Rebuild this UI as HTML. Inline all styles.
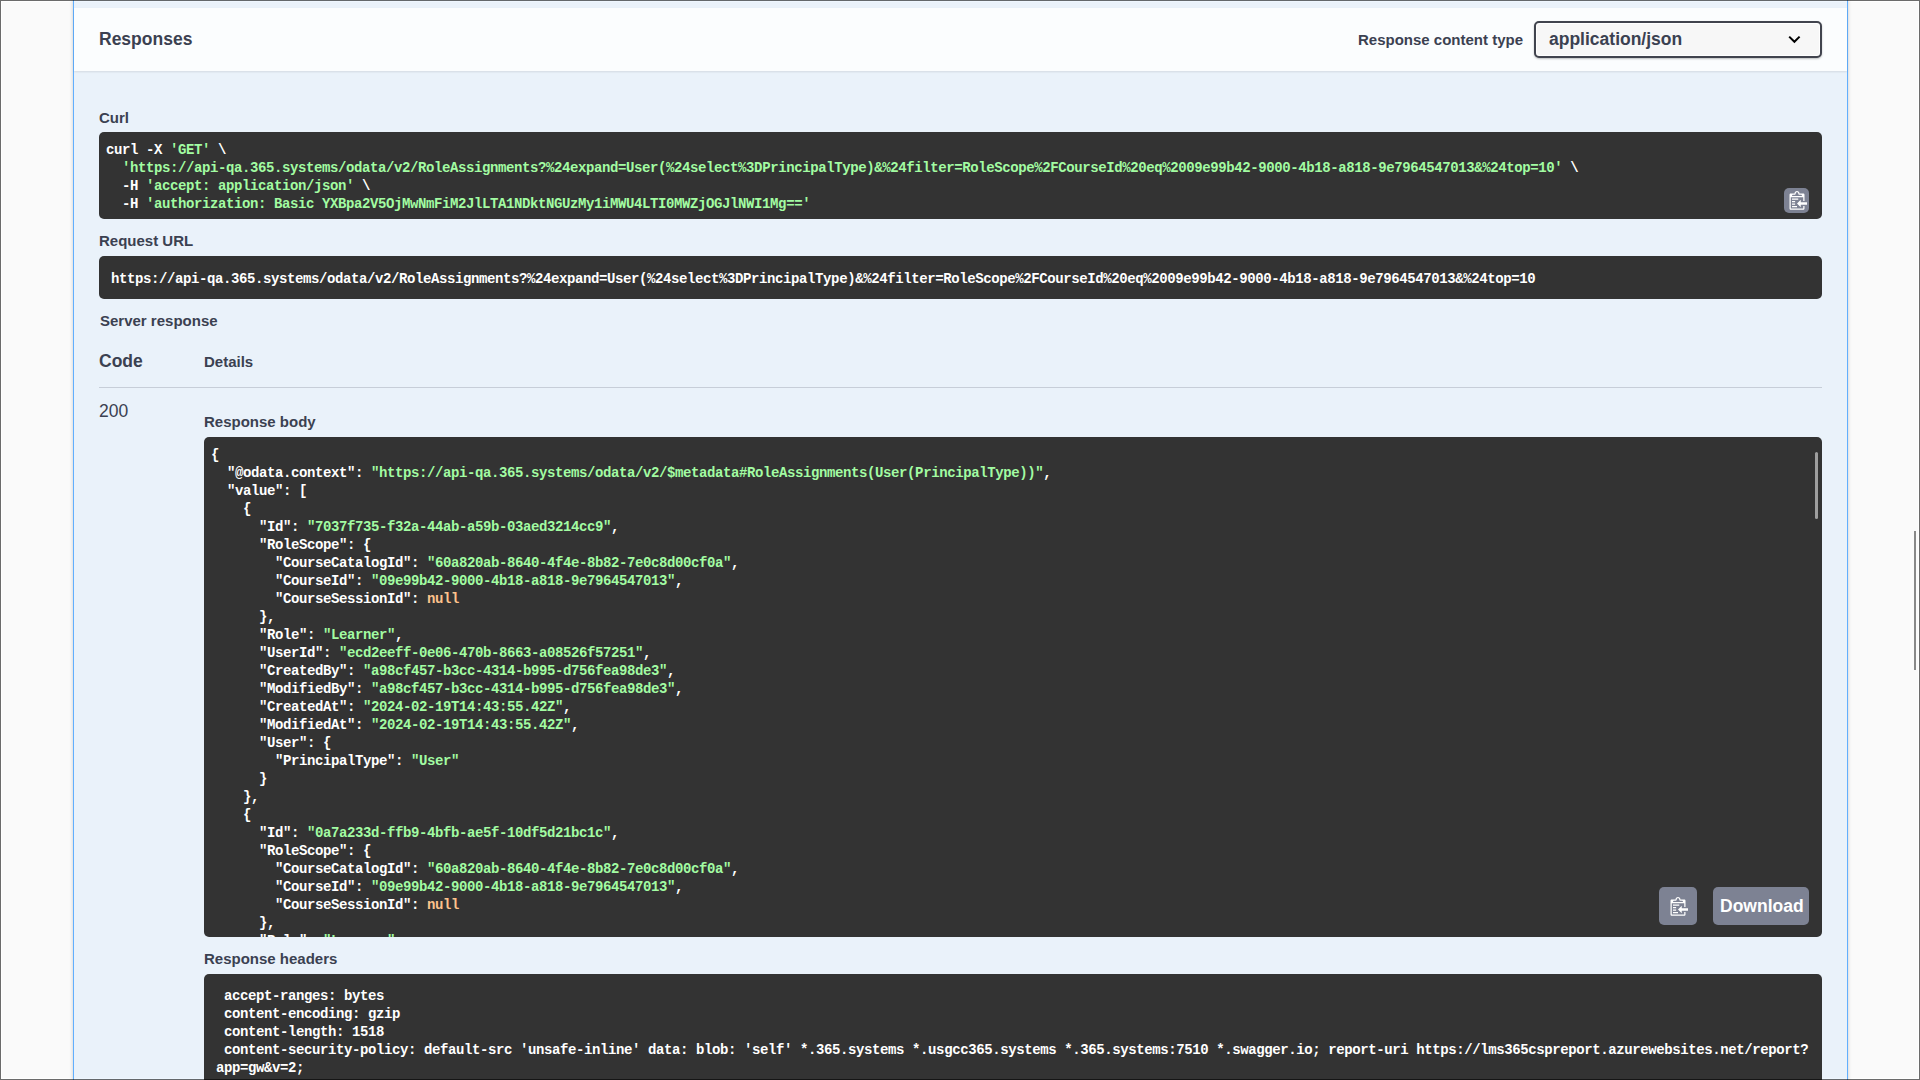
<!DOCTYPE html>
<html><head><meta charset="utf-8">
<style>
html,body{margin:0;padding:0;width:1920px;height:1080px;overflow:hidden;background:#fff;}
.inner{position:absolute;left:2px;top:2px;width:1916px;height:1076px;background:#fafafa;}
body{position:relative;font-family:"Liberation Sans",sans-serif;color:#3b4151;}
.a{position:absolute;}
.frame{position:absolute;left:0;top:0;width:1918px;height:1078px;border:1px solid rgba(0,0,0,.58);z-index:50;pointer-events:none;}
.opblock{position:absolute;left:73px;top:-10px;width:1773px;height:1200px;border:1px solid #61affe;background:rgba(97,175,254,.1);box-shadow:0 0 3.75px rgba(0,0,0,.19);}
.sechead{position:absolute;left:74px;top:8px;width:1773px;height:63px;background:rgba(255,255,255,.8);box-shadow:0 1px 2px rgba(0,0,0,.1);}
.lbl{position:absolute;font-weight:bold;font-size:15px;white-space:pre;line-height:1;}
.pre{position:absolute;background:#333;border-radius:5px;}
.mono{font-family:"Liberation Mono",monospace;font-weight:bold;font-size:14px;letter-spacing:-0.4px;line-height:18px;white-space:pre;color:#fff;position:absolute;}
.s{color:#a2fca2;}
.n{color:#fcc28c;}
.btn{position:absolute;background:#7d8293;border-radius:5px;}
</style></head><body>
<div class="inner"></div>
<div class="frame"></div>
<div class="opblock"></div>
<div class="sechead"></div>
<div class="lbl" style="left:99px;top:31px;font-size:17.5px;">Responses</div>
<div class="lbl" style="left:1358px;top:32px;">Response content type</div>
<div class="a" style="left:1534px;top:21px;width:284px;height:33px;border:2px solid #41444e;border-radius:5px;background:#f7f7f7;box-shadow:0 1px 2px rgba(0,0,0,.25), inset 0 0 0 1px #fff;"></div>
<div class="lbl" style="left:1549px;top:31px;font-size:17.5px;">application/json</div>
<svg class="a" style="left:1786px;top:33px" width="16" height="12" viewBox="0 0 16 12"><path d="M3.2 3.6 L8.4 8.8 L13.6 3.6" fill="none" stroke="#000" stroke-width="2"/></svg>

<div class="lbl" style="left:99px;top:110px;">Curl</div>
<div class="pre" style="left:99px;top:132px;width:1723px;height:87px;"></div>
<div class="mono" style="left:106px;top:141px;">curl -X <span class="s">'GET'</span> \
  <span class="s">'https://api-qa.365.systems/odata/v2/RoleAssignments?%24expand=User(%24select%3DPrincipalType)&amp;%24filter=RoleScope%2FCourseId%20eq%2009e99b42-9000-4b18-a818-9e7964547013&amp;%24top=10'</span> \
  -H <span class="s">'accept: application/json'</span> \
  -H <span class="s">'authorization: Basic YXBpa2V5OjMwNmFiM2JlLTA1NDktNGUzMy1iMWU4LTI0MWZjOGJlNWI1Mg=='</span></div>
<div class="btn" style="left:1784px;top:188px;width:25px;height:25px;"></div>
<svg class="a" style="left:1786.5px;top:191.1px" width="20" height="18.75" viewBox="0 0 16 15"><g transform="translate(2 -1)"><path fill="#fff" fill-rule="evenodd" d="M2 13h4v1H2v-1zm5-6H2v1h5V7zm2 3V8l-3 3 3 3v-2h5v-2H9zM4.5 9H2v1h2.5V9zM2 12h2.5v-1H2v1zm9 1h1v2c-.02.28-.11.52-.3.7-.19.18-.42.28-.7.3H1c-.55 0-1-.45-1-1V4c0-.55.45-1 1-1h3c0-1.11.89-2 2-2 1.11 0 2 .89 2 2h3c.55 0 1 .45 1 1v5h-1V6H1v9h10v-2zM2 5h8c0-.55-.45-1-1-1H8c-.55 0-1-.45-1-1s-.45-1-1-1-1 .45-1 1-.45 1-1 1H3c-.55 0-1 .45-1 1z"/></g></svg>

<div class="lbl" style="left:99px;top:232.5px;">Request URL</div>
<div class="pre" style="left:99px;top:256px;width:1723px;height:43px;"></div>
<div class="mono" style="left:111px;top:270px;">https://api-qa.365.systems/odata/v2/RoleAssignments?%24expand=User(%24select%3DPrincipalType)&amp;%24filter=RoleScope%2FCourseId%20eq%2009e99b42-9000-4b18-a818-9e7964547013&amp;%24top=10</div>

<div class="lbl" style="left:100px;top:312.5px;">Server response</div>
<div class="lbl" style="left:99px;top:353px;font-size:17.5px;">Code</div>
<div class="lbl" style="left:204px;top:354px;">Details</div>
<div class="a" style="left:99px;top:387px;width:1723px;height:1px;background:rgba(59,65,81,.2);"></div>
<div class="lbl" style="left:99px;top:403px;font-size:17.5px;font-weight:normal;">200</div>
<div class="lbl" style="left:204px;top:414px;">Response body</div>

<div class="pre" style="left:204px;top:437px;width:1618px;height:500px;overflow:hidden;">
<div class="mono" style="left:7px;top:9px;">{
  "@odata.context": <span class="s">"https://api-qa.365.systems/odata/v2/$metadata#RoleAssignments(User(PrincipalType))"</span>,
  "value": [
    {
      "Id": <span class="s">"7037f735-f32a-44ab-a59b-03aed3214cc9"</span>,
      "RoleScope": {
        "CourseCatalogId": <span class="s">"60a820ab-8640-4f4e-8b82-7e0c8d00cf0a"</span>,
        "CourseId": <span class="s">"09e99b42-9000-4b18-a818-9e7964547013"</span>,
        "CourseSessionId": <span class="n">null</span>
      },
      "Role": <span class="s">"Learner"</span>,
      "UserId": <span class="s">"ecd2eeff-0e06-470b-8663-a08526f57251"</span>,
      "CreatedBy": <span class="s">"a98cf457-b3cc-4314-b995-d756fea98de3"</span>,
      "ModifiedBy": <span class="s">"a98cf457-b3cc-4314-b995-d756fea98de3"</span>,
      "CreatedAt": <span class="s">"2024-02-19T14:43:55.42Z"</span>,
      "ModifiedAt": <span class="s">"2024-02-19T14:43:55.42Z"</span>,
      "User": {
        "PrincipalType": <span class="s">"User"</span>
      }
    },
    {
      "Id": <span class="s">"0a7a233d-ffb9-4bfb-ae5f-10df5d21bc1c"</span>,
      "RoleScope": {
        "CourseCatalogId": <span class="s">"60a820ab-8640-4f4e-8b82-7e0c8d00cf0a"</span>,
        "CourseId": <span class="s">"09e99b42-9000-4b18-a818-9e7964547013"</span>,
        "CourseSessionId": <span class="n">null</span>
      },
      "Role": <span class="s">"Learner"</span>,
</div>
<div class="a" style="left:1611px;top:15px;width:3px;height:67px;border-radius:2px;background:#9e9e9e;"></div>
<div class="btn" style="left:1455px;top:450px;width:37.5px;height:37.5px;"></div>
<svg class="a" style="left:1463.75px;top:460px" width="20" height="18.75" viewBox="0 0 16 15"><g transform="translate(2 -1)"><path fill="#fff" fill-rule="evenodd" d="M2 13h4v1H2v-1zm5-6H2v1h5V7zm2 3V8l-3 3 3 3v-2h5v-2H9zM4.5 9H2v1h2.5V9zM2 12h2.5v-1H2v1zm9 1h1v2c-.02.28-.11.52-.3.7-.19.18-.42.28-.7.3H1c-.55 0-1-.45-1-1V4c0-.55.45-1 1-1h3c0-1.11.89-2 2-2 1.11 0 2 .89 2 2h3c.55 0 1 .45 1 1v5h-1V6H1v9h10v-2zM2 5h8c0-.55-.45-1-1-1H8c-.55 0-1-.45-1-1s-.45-1-1-1-1 .45-1 1-.45 1-1 1H3c-.55 0-1 .45-1 1z"/></g></svg>
<div class="btn" style="left:1509px;top:450px;width:96px;height:38px;"></div>
<div class="lbl" style="left:1516px;top:461px;font-size:17.5px;color:#fff;">Download</div>
</div>

<div class="lbl" style="left:204px;top:951px;">Response headers</div>
<div class="pre" style="left:204px;top:974px;width:1618px;height:200px;"></div>
<div class="mono" style="left:216px;top:987px;"> accept-ranges: bytes 
 content-encoding: gzip 
 content-length: 1518 
 content-security-policy: default-src 'unsafe-inline' data: blob: 'self' *.365.systems *.usgcc365.systems *.365.systems:7510 *.swagger.io; report-uri https://lms365cspreport.azurewebsites.net/report?
app=gw&amp;v=2; </div>

<div class="a" style="left:1914px;top:531px;width:2px;height:139px;background:#888;"></div>
</body></html>
